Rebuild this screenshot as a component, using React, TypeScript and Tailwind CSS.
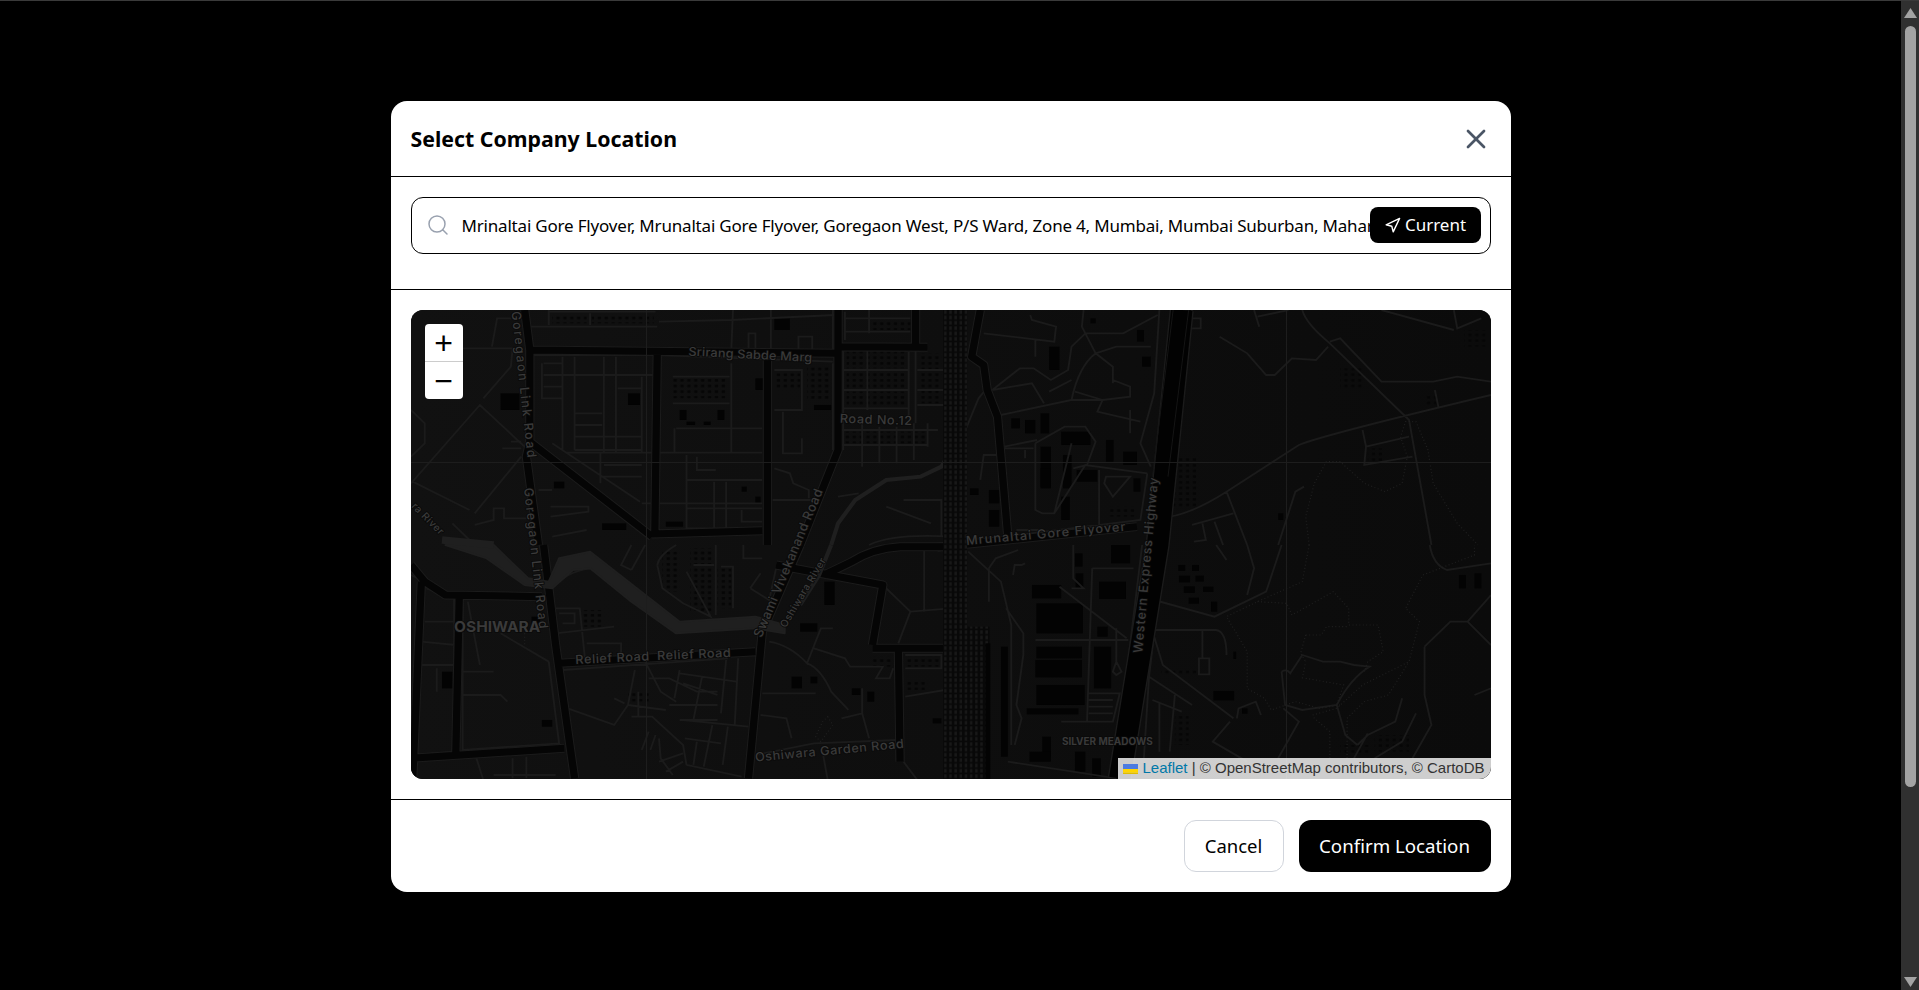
import { Navigation, Search, X } from "lucide-react";

type Quad = {
  x: number;
  y: number;
  thin: string;
  major?: string;
  dotted?: string;
  dense?: number[][];
  blocks: number[][];
};

// coordinates are 2.904x / 3x of the map's pixels, one origin per quadrant
const quads: Quad[] = [
  {
    x: 0,
    y: 0,
    major:
      "M330 0 L345 120 L1240 130 M1240 110 L1500 112 M345 120 L345 395 L335 440 L370 705 M345 395 L700 680 M715 125 L708 668 M700 672 L1020 662 M1035 150 V705 M1240 0 V420 L1130 705 M1465 0 V112",
    thin:
      "M400 5 H710 M330 50 H715 M400 0 V45 M520 10 V45 M720 35 L930 30 L1230 15 M935 0 L930 120 M1045 0 V120 M1225 0 V125 M980 120 V70 H1000 V120 M1125 125 V80 H1165 V125 M345 135 H715 L1225 155 M440 140 V420 M475 140 V420 M560 140 V425 M595 140 V425 M385 160 H440 M380 160 V265 H440 M385 195 H710 M385 230 H440 M475 310 H555 M475 345 H555 M475 380 H670 M475 420 H670 M600 235 H670 M670 200 V430 M410 400 L665 575 M550 430 V520 M560 465 H670 M550 500 H670 M670 580 H1020 M760 200 H925 M760 280 H925 M770 355 H1020 M765 355 V430 M930 160 V430 M1025 155 V430 M450 428 H1020 M800 435 V660 M800 510 H1020 M880 515 V655 M915 515 V655 M800 595 H1020 M830 440 V480 H885 M960 600 V635 H1020 M800 655 H1020 M1055 180 H1135 V300 H1055 M1080 305 V430 H1135 V385 M1050 570 H1170 M1055 475 L1100 490 L1110 520 L1155 540 V565 M1225 160 V420 M1255 115 V420 M1255 115 H1450 M1325 120 V300 M1445 125 V320 M1255 180 H1445 M1255 240 H1445 M1255 295 H1445 M1465 120 V340 M1470 180 H1550 M1470 240 H1550 M1470 285 H1550 M1260 5 V90 M1330 0 V70 M1260 65 H1450 M1260 25 H1450 M1250 360 H1530 M1250 405 H1500 M1310 340 V470 M1360 350 V460 M1410 350 V460 M1460 340 V450 M1500 340 V410 M0 300 L40 340 V400 L0 440 M0 520 L200 285 L340 420 M5 515 L170 600 M235 110 L250 25 H290 M130 115 H295 L290 170 L210 265 M320 440 L185 610 M185 645 L240 630 V595 H270 V625 L335 625 M120 640 L170 690 M405 590 H515 V605 L405 620 M410 680 L510 660 M370 540 H410 M1330 705 Q1400 670 1568 680 M1430 570 H1540 V680 M1380 590 L1510 640 M1240 560 L1300 550 M265 415 H320 M290 395 H320",
    blocks: [
      [630, 250, 35, 35],
      [260, 250, 55, 50],
      [1055, 25, 45, 35],
      [1000, 205, 25, 35],
      [780, 300, 20, 30],
      [890, 300, 20, 30],
      [800, 335, 25, 10],
      [850, 335, 20, 10],
      [740, 635, 50, 15],
      [555, 640, 70, 20],
      [415, 515, 30, 20],
      [1000, 560, 15, 20],
      [960, 530, 15, 15],
      [1170, 285, 50, 15],
    ],
    dense: [
      [1265, 125, 175, 50],
      [1265, 185, 175, 50],
      [1265, 245, 175, 45],
      [1260, 365, 240, 35],
      [1340, 35, 110, 25],
      [760, 205, 160, 60],
      [1480, 130, 60, 150],
      [410, 15, 100, 25],
      [525, 15, 180, 25],
      [1060, 190, 70, 50],
      [1150, 170, 70, 100],
    ],
  },
  {
    x: 540,
    y: 0,
    major: "M85 0 L60 140 L95 165 L105 240 L135 320 L165 680 M-40 712 L540 650",
    thin:
      "M95 70 L300 95 L305 50 L235 30 L230 15 M245 90 V140 M120 240 L200 175 H240 L290 210 L340 180 L350 110 L390 70 H500 L600 15 M385 0 L380 50 L420 130 L470 170 V220 M420 130 L480 110 H580 M420 130 Q370 170 350 270 L145 315 M120 240 L235 220 L270 280 M350 210 L285 245 M350 270 L440 270 L520 260 V230 L470 210 M360 245 L440 270 L425 305 L550 335 M520 300 V370 M605 0 L590 250 L550 400 L580 470 M700 0 L635 500 L610 700 M570 490 L390 465 L300 610 M245 400 L330 350 H390 L420 395 L395 465 L355 475 M245 400 V600 L265 610 H300 L350 400 M155 410 L250 390 M155 415 H240 M215 420 V445 M430 480 V650 M150 435 H95 L85 510 M30 390 L80 265 L100 240 M635 620 Q700 610 800 545 L1010 405 Q1080 375 1568 255 M780 80 L860 130 L915 195 H940 L990 145 L1060 150 L1095 110 M1020 0 Q1030 40 1100 100 L1330 330 L1395 705 M1100 95 L1130 85 L1250 215 H1400 L1470 200 L1568 215 M1460 0 L1470 55 L1540 25 M880 0 L895 50 M890 20 L980 0 M1250 0 L1460 60 M800 545 L860 705 M700 645 L820 610 M730 640 L740 690 L705 695 M765 635 L790 705 M1025 530 L1000 545 L950 705 M1195 360 L1205 410 L1200 465 L1340 440 M1205 410 L1330 380 M1405 240 L1415 290 M155 680 L550 630 L570 490 M190 660 H265 M700 25 H725 V55 H700 M450 500 L520 500 L470 560 L445 520 Z",
    dotted:
      "M1040 705 L1030 620 L1055 520 L1090 455 H1130 L1200 520 L1260 545 L1310 520 L1325 440 L1305 380 L1320 335 H1350 L1385 420 L1400 520 L1470 640 L1530 705",
    blocks: [
      [285, 110, 30, 70],
      [260, 310, 25, 60],
      [215, 330, 30, 40],
      [175, 325, 25, 30],
      [320, 365, 85, 40],
      [260, 410, 30, 120],
      [260, 475, 30, 60],
      [325, 435, 25, 100],
      [320, 560, 25, 70],
      [365, 480, 60, 35],
      [450, 390, 22, 65],
      [500, 425, 40, 40],
      [555, 140, 25, 30],
      [540, 60, 20, 35],
      [110, 540, 30, 40],
      [110, 600, 30, 50],
      [530, 505, 20, 40],
      [405, 25, 15, 15],
      [55, 535, 25, 20],
      [950, 610, 15, 20],
    ],
    dense: [
      [1130, 175, 70, 60],
      [1380, 255, 30, 30],
      [1490, 60, 70, 50],
      [1210, 415, 45, 40],
      [645, 440, 70, 150],
      [460, 590, 80, 30],
    ],
  },
  {
    x: 0,
    y: 235,
    major:
      "M0 60 L40 110 L100 150 L380 155 M30 110 L5 700 M140 160 L130 630 M385 0 L420 300 L475 700 M0 640 L445 610 M430 355 L1000 320 M1130 0 L1020 260 L980 700 M1060 60 L1370 120 L1340 300 M1340 310 H1568 M1415 300 L1420 650 M1200 90 L1280 50 Q1340 10 1420 5 H1568",
    thin:
      "M0 90 L20 100 M45 130 L125 160 V620 L10 630 M150 175 V615 L430 595 L400 350 M165 170 L200 360 M40 230 H130 M30 360 H130 M30 290 L130 300 M75 370 V440 M150 380 H240 M150 450 H260 L280 470 M260 265 L400 350 M420 190 H490 L505 340 M430 205 H475 V235 H440 M420 265 L590 245 M510 295 H610 V330 M440 375 L920 340 M455 490 L590 540 L630 480 L650 375 M660 440 V515 M630 480 L740 495 M590 460 L620 475 M640 515 H700 L790 600 L800 660 M690 560 L670 615 M710 570 L695 615 M720 580 L725 640 L760 690 M720 650 L790 625 M680 350 L725 440 L770 470 M690 400 H750 L830 440 H890 M780 375 L765 460 M790 415 L890 450 M845 395 L820 525 M780 385 L945 410 M750 480 H890 M780 525 H890 M950 340 L940 540 M915 345 L900 505 M790 525 L980 545 M875 540 L850 665 M920 545 L905 660 M795 580 L900 595 M830 590 L820 660 M800 660 L960 695 M740 680 L790 650 M640 0 L610 60 L640 75 M680 0 L640 75 M715 60 L730 130 L790 175 L870 215 L800 80 M770 0 Q720 30 715 60 M885 0 V210 M820 60 H880 M900 65 H935 V190 M965 0 V40 H1020 M985 130 L1040 165 L1060 70 M985 130 L1015 85 M1040 290 Q1100 300 1150 355 L1190 250 H1225 M1150 355 Q1190 370 1220 440 L1270 495 M1170 310 L1260 340 L1275 365 H1370 L1350 400 H1390 L1400 370 M1250 520 L1310 505 L1330 580 M1310 430 V505 M1435 330 H1540 V370 H1435 M1435 455 L1550 435 M1370 120 L1450 200 L1568 190 M1450 200 L1415 295 M1490 0 V200 M1020 445 H1175 M1015 510 L1090 520 L1105 580 M1000 630 L1170 595 L1410 585 M1195 620 L1210 705 M1430 650 L1470 705 M410 130 Q450 80 520 70 M190 640 L210 705 M240 690 H420 M295 640 V700 M335 635 V700",
    dotted: "M1210 515 L1225 540 L1190 590 L1175 575 L1195 530 Z M330 265 V300",
    blocks: [
      [1105, 395, 30, 35],
      [1160, 395, 20, 20],
      [350, 215, 25, 20],
      [1280, 430, 25, 20],
      [1325, 440, 20, 30],
      [1515, 520, 25, 15],
      [1130, 235, 50, 25],
      [1200, 110, 30, 70],
      [90, 380, 30, 50],
      [380, 525, 30, 20],
    ],
    dense: [
      [810, 10, 70, 190],
      [890, 70, 40, 120],
      [730, 20, 50, 120],
      [1435, 335, 100, 30],
      [1440, 410, 60, 25],
      [1340, 335, 60, 30],
      [500, 195, 60, 50],
      [630, 440, 60, 30],
    ],
  },
  {
    x: 540,
    y: 235,
    thin:
      "M355 0 V100 L385 130 H350 M410 70 H530 M410 70 L395 530 M315 125 L510 280 M245 285 H515 M480 250 V360 M480 350 L495 380 L480 390 L470 380 Z M400 445 H490 L470 530 H320 M400 465 H470 M400 485 H470 M400 505 H470 M160 190 L210 265 V330 L190 480 L205 520 L185 600 M110 70 L130 40 L195 15 M110 70 V170 M180 90 L185 60 H205 L215 55 M50 20 L145 110 L175 240 V600 M165 650 L480 700 M590 165 L765 215 L915 140 L960 0 M770 0 L800 45 M860 0 L880 70 L860 150 M590 255 H770 Q800 260 800 330 M730 255 V340 M720 340 H750 V388 H720 Z M590 275 L615 360 L820 520 M575 395 L700 480 M585 465 L670 500 M605 470 V620 M650 450 L635 620 M810 530 L760 590 L860 650 M830 520 L835 490 L885 470 L900 510 M965 490 L1010 530 L950 640 M960 380 Q975 370 985 385 L1020 330 L1080 350 H1130 L1170 360 L1215 365 Q1160 400 1120 480 L1020 495 L970 480 L960 380 M1120 480 L1145 570 L1180 600 M1180 600 L1210 570 L1290 530 L1310 460 M1170 640 L1210 565 M1350 505 L1310 590 L1230 640 M1390 0 Q1400 60 1440 75 L1568 55 M1375 305 L1450 230 H1500 L1568 300 M1375 305 V450 L1395 540 L1340 640 M1500 230 L1568 150 M1520 450 L1568 430 M555 0 L520 300 L485 640 M620 0 L575 395 L560 640",
    dotted:
      "M1040 0 L1020 110 L890 170 L800 215 L860 320 V430 L910 460 L930 495 L1000 470 L1070 490 L1130 480 M890 170 L975 175 L990 210 L1110 140 L1155 190 V240 H1240 L1255 320 L1210 350 L1200 380 M1030 270 L1075 270 L1090 245 H1155 M1030 270 L1015 325 L1030 350 M1030 400 L1140 420 L1120 480 M1020 400 L1030 350 M1050 510 L1120 490 L1195 420 L1330 350 L1360 230 L1320 190 L1370 90 L1520 30 V0 M1100 640 V560 L1050 515 M1150 640 V520 L1200 470 L1270 450 L1330 350",
    blocks: [
      [235, 120, 85, 40],
      [248, 175, 135, 90],
      [248, 305, 132, 35],
      [245, 345, 135, 52],
      [248, 420, 140, 60],
      [220, 490, 150, 18],
      [415, 305, 50, 125],
      [430, 110, 78, 52],
      [360, 25, 22, 40],
      [362, 85, 22, 45],
      [465, 0, 55, 55],
      [425, 245, 30, 30],
      [660, 60, 20, 18],
      [700, 60, 20, 18],
      [662, 92, 32, 20],
      [710, 92, 24, 18],
      [676, 124, 32, 20],
      [690, 158, 30, 18],
      [732, 125, 30, 16],
      [755, 170, 18, 30],
      [1475, 90, 20, 40],
      [1520, 85, 20, 45],
      [820, 320, 8, 22],
      [762, 438, 60, 28],
      [845, 490, 16, 16],
      [265, 575, 25, 60],
      [228, 620, 62, 30],
      [360, 620, 30, 60],
      [410, 640, 25, 55],
      [145, 305, 20, 330],
    ],
    dense: [
      [610, 375, 110, 15],
      [650, 510, 40, 90],
      [1130, 600, 90, 30],
      [1230, 570, 100, 50],
    ],
  },
];

function MapTiles() {
  return (
    <svg viewBox="0 0 1080 469" className="absolute inset-0 h-full w-full bg-[#0d0d0d]">
      <defs>
        <pattern id="dense" width="20" height="17" patternUnits="userSpaceOnUse">
          <rect x="2" y="3" width="10" height="8" fill="#060606" />
        </pattern>
        <pattern id="rail" width="15" height="16" patternUnits="userSpaceOnUse">
          <rect width="15" height="16" fill="#080808" />
          <rect x="3" y="1" width="7" height="11" fill="#181818" />
        </pattern>
        <linearGradient id="fade" x1="0" x2="1" y1="0" y2="0">
          <stop offset="0" stopColor="#111111" />
          <stop offset="1" stopColor="#0b0b0b" />
        </linearGradient>
      </defs>
      <rect width="1080" height="469" fill="url(#fade)" />
      {quads.map((q) => (
        <g key={`${q.x}-${q.y}`} transform={`translate(${q.x} ${q.y}) scale(0.3444 0.3333)`} fill="none">
          {q.blocks.map(([x, y, w, h]) => (
            <rect key={`${x}-${y}`} x={x} y={y} width={w} height={h} fill="#030303" />
          ))}
          {q.dense?.map(([x, y, w, h]) => (
            <rect key={`${x}-${y}`} x={x} y={y} width={w} height={h} fill="url(#dense)" />
          ))}
          <path d={q.thin} stroke="#1b1b1b" strokeWidth="5.5" />
          {q.dotted && <path d={q.dotted} stroke="#1f1f1f" strokeWidth="3.5" strokeDasharray="3 7" />}
          {q.major && <path d={q.major} stroke="#1b1b1b" strokeWidth="27" strokeLinejoin="round" />}
          {q.major && <path d={q.major} stroke="#050505" strokeWidth="21" strokeLinejoin="round" />}
        </g>
      ))}

      {/* river */}
      <g transform="translate(0 235) scale(0.3444 0.3333)">
        <path
          d="M100 0 H240 L340 100 L400 110 L430 40 L520 20 L780 230 L1000 215 L1085 240 V265 L1000 250 L770 265 L640 170 L520 70 L470 75 L410 130 L330 120 L220 40 Z"
          fill="#1f1f1f"
          stroke="#1f1f1f"
          strokeWidth="6"
          strokeLinejoin="round"
        />
        <path d="M1130 180 L1185 90 L1220 0" fill="none" stroke="#1f1f1f" strokeWidth="12" />
      </g>
      <g transform="scale(0.3444 0.3333)" fill="none" stroke="#1f1f1f">
        <path d="M1220 705 L1240 640 L1290 570 L1380 510 L1480 500 L1540 470 L1568 420" strokeWidth="12" />
        <path d="M90 690 L240 705" strokeWidth="22" />
      </g>

      {/* railway and the expressway */}
      <g transform="scale(0.3444 0.3333)">
        <rect x="1545" y="0" width="70" height="1410" fill="url(#rail)" />
        <rect x="1590" y="950" width="90" height="460" fill="url(#rail)" />
        <rect x="1668" y="1000" width="14" height="410" fill="#030303" />
      </g>
      <g transform="translate(540 0) scale(0.3444 0.3333)" fill="none">
        <path d="M670 0 L600 705 L490 1405" stroke="#1b1b1b" strokeWidth="70" />
        <path d="M670 0 L600 705 L490 1405" stroke="#020202" strokeWidth="62" />
        <path d="M645 0 L585 500 M690 0 L630 500" stroke="#141414" strokeWidth="3" />
      </g>

      {/* tile seams */}
      <path d="M235.5 0 V469 M875.5 0 V469 M0 152.5 H1080" stroke="#1d1d1d" strokeWidth="1" fill="none" />

      {/* labels */}
      <g
        transform="scale(0.3444 0.3333)"
        className="font-[Inter,sans-serif]"
        fill="#3a3a3a"
        stroke="#0a0a0a"
        strokeWidth="5"
        paintOrder="stroke"
        fontSize="37"
        fontWeight="500"
        letterSpacing="1.5"
      >
        <text transform="translate(805 137) rotate(3)" letterSpacing="0.5">Srirang Sabde Marg</text>
        <text transform="translate(1245 338) rotate(2)">Road No.12</text>
        <text transform="translate(292 5) rotate(84)" letterSpacing="5">Goregaon Link Road</text>
        <text transform="translate(328 535) rotate(84)" letterSpacing="4">Goregaon Link Road</text>
        <text transform="translate(1018 985) rotate(-68)" fontSize="38">Swami Vivekanand Road</text>
        <text transform="translate(1088 955) rotate(-60)" fontSize="30">Oshiwara River</text>
        <text transform="translate(0 590) rotate(46)" fontSize="30">ra River</text>
        <text transform="translate(478 1062) rotate(-3)">Relief Road</text>
        <text transform="translate(715 1050) rotate(-2.5)">Relief Road</text>
        <text transform="translate(1000 1355) rotate(-5.5)">Oshiwara Garden Road</text>
        <text transform="translate(125 965)" fontSize="45" fontWeight="700" letterSpacing="0">OSHIWARA</text>
        <text transform="translate(1613 705) rotate(-5.3)" letterSpacing="3">Mrunaltai Gore Flyover</text>
        <text transform="translate(2123 1030) rotate(-85)" letterSpacing="3">Western Express Highway</text>
        <text transform="translate(1890 1305)" fontSize="29" fontWeight="700" letterSpacing="0">SILVER MEADOWS</text>
      </g>
    </svg>
  );
}

export default function App() {
  return (
    <div className="flex h-[990px] w-full flex-col overflow-hidden bg-black font-['Noto_Sans',sans-serif]">
      <div className="h-px bg-[#3a3a3a]" />
      <div className="flex flex-1">
        <main className="flex flex-1 justify-center pt-[100px]">
          <div className="flex h-[791px] w-[1120px] flex-col rounded-2xl bg-white">
            <header className="flex h-[76px] items-center justify-between border-b border-black px-5">
              <h2 className="text-[21.3px] font-bold text-black">Select Company Location</h2>
              <button className="-mr-px text-gray-600">
                <X size={32} strokeWidth={2} />
              </button>
            </header>

            <div className="h-[113px] border-b border-black px-5 pt-5">
              <div className="relative h-[57px] overflow-hidden rounded-xl border border-black">
                <Search size={24} strokeWidth={1.5} className="absolute left-[14px] top-[15px] text-gray-400" />
                <input
                  readOnly
                  value="Mrinaltai Gore Flyover, Mrunaltai Gore Flyover, Goregaon West, P/S Ward, Zone 4, Mumbai, Mumbai Suburban, Maharashtra, 400104, India"
                  className="h-full w-full pl-[50px] pr-[120px] text-[17px] tracking-[-0.19px] text-black outline-none"
                />
                <button className="absolute right-[9px] top-[9px] flex h-[36px] w-[111px] items-center justify-center gap-1 rounded-lg bg-black text-[17px] text-white">
                  <Navigation size={17} strokeWidth={2} />
                  Current
                </button>
              </div>
            </div>

            <div className="flex-1 border-b border-black p-5">
              <div className="relative h-[469px] overflow-hidden rounded-xl">
                <MapTiles />
                <div className="absolute left-[14px] top-[14px] flex w-[38px] flex-col overflow-hidden rounded bg-white text-black">
                  <button className="flex h-[38px] items-center justify-center border-b border-[#ccc] font-['Liberation_Sans',sans-serif] text-[32px] leading-none">
                    +
                  </button>
                  <button className="flex h-[37px] items-center justify-center font-['Liberation_Sans',sans-serif] text-[32px] leading-none">
                    −
                  </button>
                </div>
                <div className="absolute bottom-0 right-0 flex h-[21px] items-center gap-[5px] bg-white/80 pl-[5px] pr-[6px] font-['Liberation_Sans',sans-serif] text-[15px] text-[#333]">
                  <svg width="15" height="10" viewBox="0 0 12 8">
                    <path fill="#4C7BE1" d="M0 0h12v4H0z" />
                    <path fill="#FFD500" d="M0 4h12v3H0z" />
                    <path fill="#E0BC00" d="M0 7h12v1H0z" />
                  </svg>
                  <span>
                    <a className="text-[#0078a8]">Leaflet</a> | © OpenStreetMap contributors, © CartoDB
                  </span>
                </div>
              </div>
            </div>

            <footer className="flex h-[92px] items-center justify-end gap-[15px] px-5">
              <button className="h-[52px] w-[100px] rounded-xl border border-gray-300 bg-white text-[18.5px] text-black">
                Cancel
              </button>
              <button className="h-[52px] w-[192px] rounded-xl bg-black text-[18.7px] text-white">
                Confirm Location
              </button>
            </footer>
          </div>
        </main>

        <aside className="flex w-[18px] flex-col items-center bg-[#303030] pt-[7px]">
          <svg width="13" height="10" viewBox="0 0 13 10">
            <path d="M6.5 0 L13 10 H0 Z" fill="#a3a3a3" />
          </svg>
          <div className="mt-[8px] h-[761px] w-[11px] rounded-full bg-[#a3a3a3]" />
          <svg width="13" height="10" viewBox="0 0 13 10" className="mt-auto mb-[3px]">
            <path d="M0 0 H13 L6.5 10 Z" fill="#a3a3a3" />
          </svg>
        </aside>
      </div>
    </div>
  );
}
